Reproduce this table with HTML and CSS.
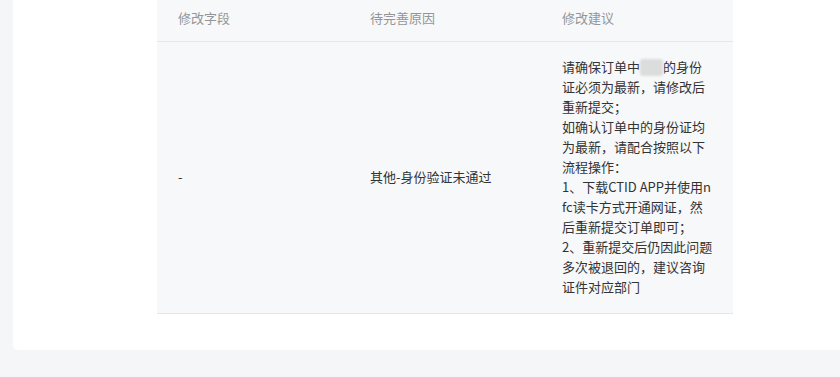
FILE: index.html
```html
<!DOCTYPE html>
<html lang="zh-CN">
<head>
<meta charset="utf-8">
<link rel="stylesheet" href="styles.css">
</head>
<body>
<div class="page">
  <div class="card">
    <table class="grid">
      <colgroup><col class="c"><col class="c"><col class="c"></colgroup>
      <thead>
        <tr><th>修改字段</th><th>待完善原因</th><th>修改建议</th></tr>
      </thead>
      <tbody>
        <tr>
          <td>-</td>
          <td>其他-身份验证未通过</td>
          <td class="advice">请确保订单中<span class="mask"></span>的身份证必须为最新，请修改后重新提交；<br>如确认订单中的身份证均为最新，请配合按照以下流程操作：<br>1、下载CTID APP并使用nfc读卡方式开通网证，然后重新提交订单即可；<br>2、重新提交后仍因此问题多次被退回的，建议咨询证件对应部门</td>
        </tr>
      </tbody>
    </table>
  </div>
</div>
</body>
</html>
```

FILE: styles.css
```css
html, body {
  margin: 0;
  padding: 0;
}
body {
  background: #f5f6f8;
  font-family: "Noto Sans CJK SC", "Microsoft YaHei", sans-serif;
  font-size: 13px;
  color: #333333;
}
.page {
  padding-left: 13px;
}
.card {
  background: #ffffff;
  height: 350px;
  border-bottom-left-radius: 5px;
  padding-left: 144px;
  box-sizing: border-box;
}
.grid {
  width: 576px;
  table-layout: fixed;
  border-collapse: collapse;
  background: #f7f8fa;
}
.grid .c {
  width: 192px;
}
.grid th {
  font-weight: normal;
  text-align: left;
  color: #939699;
  line-height: 20px;
  padding: 8px 21px 13px;
  border-bottom: 1px solid #e4e6ea;
  height: 20px;
}
.grid td {
  padding: 15px 21px 16px;
  line-height: 20px;
  vertical-align: middle;
  border-bottom: 1px solid #e4e6ea;
  word-break: break-all;
}
.grid td.advice {
  padding-right: 19px;
}
.mask {
  display: inline-block;
  width: 23px;
  height: 17px;
  vertical-align: -4px;
  background: #dcdcdc;
  border-radius: 3px;
  filter: blur(1.2px);
}
```
